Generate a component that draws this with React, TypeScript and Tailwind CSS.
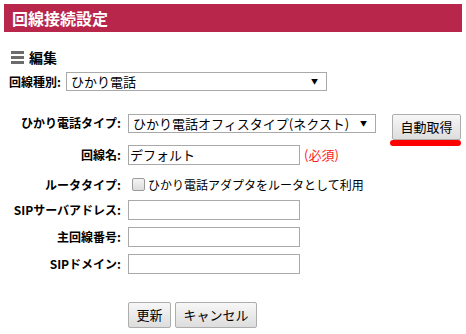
import React from 'react';

const FONT = { fontFamily: '"Noto Sans CJK JP", "Noto Sans", sans-serif' };

interface FieldRowProps {
  label: string;
  className?: string;
  children: React.ReactNode;
}

function FieldRow({ label, className = '', children }: FieldRowProps) {
  return (
    <div className={`flex items-center ${className}`}>
      <div className="w-[121px] shrink-0 text-right text-[12px] font-bold leading-none text-black">
        {label}
      </div>
      <div className="ml-[7px] flex items-center">{children}</div>
    </div>
  );
}

function TextBox({ value = '' }: { value?: string }) {
  return (
    <input
      readOnly
      value={value}
      className="h-[20px] w-[172px] border border-[#a9a9a9] bg-white px-[1px] text-[13px] leading-none text-black outline-none"
      style={FONT}
    />
  );
}

function SelectBox({ value, width }: { value: string; width: string }) {
  return (
    <div
      className={`flex h-[19px] ${width} items-center justify-between border border-[#a9a9a9] bg-white pl-[4px] pr-[8px] text-[13px] leading-none text-black`}
    >
      <span>{value}</span>
      <span className="text-[7px]">▼</span>
    </div>
  );
}

function GrayButton({ label, className = '' }: { label: string; className?: string }) {
  return (
    <button
      className={`h-[26px] rounded-[2px] border border-[#adadad] bg-gradient-to-b from-[#f7f7f7] to-[#dddddd] text-[13px] leading-none text-black ${className}`}
      style={FONT}
    >
      {label}
    </button>
  );
}

export default function App() {
  return (
    <div className="h-[334px] w-[466px] bg-white p-[4px]" style={FONT}>
      {/* Title bar */}
      <div className="flex h-[28px] w-[458px] items-center bg-[#b8264b] pl-[8px] text-[16px] font-bold text-white">
        回線接続設定
      </div>

      {/* Section heading */}
      <div className="mt-[16px] flex h-[18px] items-center pl-[7px]">
        <div className="flex w-[13px] flex-col gap-[2px]">
          <div className="h-[3px] bg-[#6b6b6b]" />
          <div className="h-[3px] bg-[#6b6b6b]" />
          <div className="h-[3px] bg-[#6b6b6b]" />
        </div>
        <span className="ml-[5px] text-[14px] font-bold leading-none text-black">編集</span>
      </div>

      {/* Line kind */}
      <div className="mt-[6px] flex items-center pl-[5px]">
        <span className="text-[12px] font-bold leading-none text-black">回線種別:</span>
        <div className="ml-[5px]">
          <SelectBox value="ひかり電話" width="w-[261px]" />
        </div>
      </div>

      {/* Form rows */}
      <div className="-ml-[4px]">
        <div className="mt-[22px] flex items-start">
          <div className="flex h-[20px] w-[121px] shrink-0 items-center justify-end text-[12px] font-bold leading-none text-black">
            ひかり電話タイプ:
          </div>
          <div className="ml-[7px] mt-[1px]">
            <SelectBox value="ひかり電話オフィスタイプ(ネクスト)" width="w-[248px]" />
          </div>
          <div className="relative ml-[16px]">
            <GrayButton label="自動取得" className="w-[69px]" />
            <div className="absolute left-[-2px] top-[27px] h-[6px] w-[71px] rounded-full bg-[#ff0000]" />
          </div>
        </div>

        <FieldRow label="回線名:" className="mt-[5px]">
          <TextBox value="デフォルト" />
          <span className="ml-[4px] text-[13px] leading-none text-[#ff1a1a]">(必須)</span>
        </FieldRow>

        <FieldRow label="ルータタイプ:" className="mt-[10px] h-[20px]">
          <span className="ml-[4px] h-[13px] w-[13px] rounded-[2px] border border-[#9a9a9a] bg-gradient-to-b from-[#f4f4f4] to-[#dcdcdc]" />
          <span className="ml-[3px] text-[12px] leading-none text-black">
            ひかり電話アダプタをルータとして利用
          </span>
        </FieldRow>

        <FieldRow label="SIPサーバアドレス:" className="mt-[5px]">
          <TextBox />
        </FieldRow>

        <FieldRow label="主回線番号:" className="mt-[7px]">
          <TextBox />
        </FieldRow>

        <FieldRow label="SIPドメイン:" className="mt-[7px]">
          <TextBox />
        </FieldRow>

        <div className="ml-[128px] mt-[28px] flex gap-[4px]">
          <GrayButton label="更新" className="w-[43px]" />
          <GrayButton label="キャンセル" className="w-[82px]" />
        </div>
      </div>
    </div>
  );
}
